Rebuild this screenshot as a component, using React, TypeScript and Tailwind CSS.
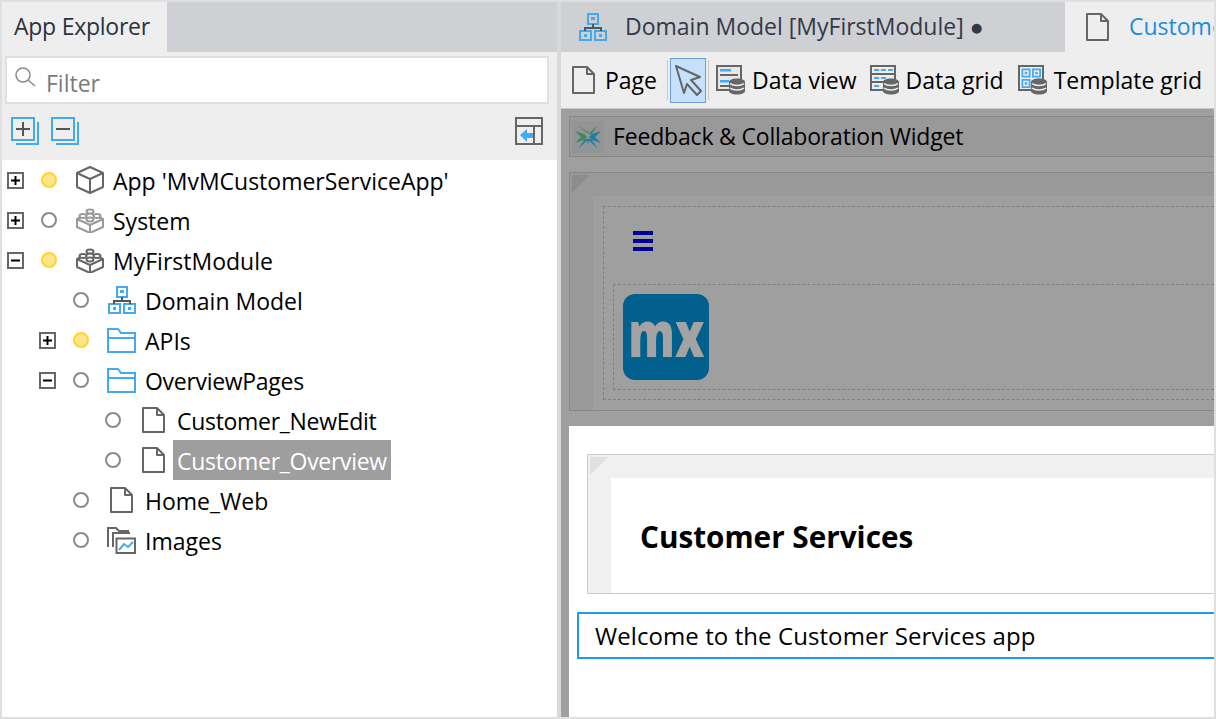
import type { ReactNode } from "react";

const Svg = ({ w, h, children }: { w: number; h: number; children: ReactNode }) => (
  <svg width={w} height={h} viewBox={`0 0 ${w} ${h}`} fill="none" className="shrink-0">
    {children}
  </svg>
);

const PageIcon = ({ h = 28 }: { h?: number }) => (
  <Svg w={23} h={h}>
    <path d={`M1 1h14l7 7v${h - 9}H1z M15 1v7h7`} stroke="#666" strokeWidth="2" strokeLinejoin="round" />
  </Svg>
);

const CubeIcon = () => (
  <Svg w={30} h={30}>
    <path d="M15 2l13 6v14l-13 6-13-6V8z M2 8l13 6 13-6 M15 14v14" stroke="#666" strokeWidth="2" strokeLinejoin="round" />
  </Svg>
);

const LegoIcon = ({ color }: { color: string }) => (
  <Svg w={30} h={25}>
    <path d="M15 5l13 6v8l-13 6-13-6v-8z M2 11l13 6 13-6 M15 17v8" stroke={color} strokeWidth="2" strokeLinejoin="round" />
    <ellipse cx="15" cy="3.500" rx="3.500" ry="2" fill="#fff" stroke={color} strokeWidth="2" />
    <ellipse cx="8" cy="8" rx="3.500" ry="2" fill="#fff" stroke={color} strokeWidth="2" />
    <ellipse cx="22" cy="8" rx="3.500" ry="2" fill="#fff" stroke={color} strokeWidth="2" />
    <ellipse cx="15" cy="11.500" rx="3.500" ry="2" fill="#fff" stroke={color} strokeWidth="2" />
  </Svg>
);

const DomainIcon = () => (
  <Svg w={28} h={28}>
    <path d="M9 1h10v10H9z M1 18h11v9H1z M16 18h11v9H16z" stroke="#42aaf0" strokeWidth="2" />
    <path d="M12 4h4v3h-4z M5 21h3v3H5z M20 21h3v3h-3z" fill="#42aaf0" />
    <path d="M14 11v4 M6 18v-3h16v3" stroke="#555" strokeWidth="2" />
  </Svg>
);

const FolderIcon = () => (
  <Svg w={29} h={25}>
    <path d="M1 1h10l3 4h14v19H1z M1 10h27" stroke="#42aaf0" strokeWidth="2" />
  </Svg>
);

const ImagesIcon = () => (
  <Svg w={29} h={27}>
    <path d="M1 20V1h8l3 3h10 M6 20V6h17" stroke="#666" strokeWidth="2" />
    <path d="M9.500 11.500h18.500v14.500H9.500z" stroke="#666" strokeWidth="2" />
    <path d="M12 23l5-6 4 3 5-5" stroke="#42aaf0" strokeWidth="2" />
  </Svg>
);

const Stack = () => (
  <g>
    <path d="M13 17c0-2 3.500-3.500 8-3.500s8 1.500 8 3.500v9c0 2-3.500 3.500-8 3.500s-8-1.500-8-3.500z" fill="#666" />
    <path d="M14 18.500c1.500 1.300 4 2 7 2s5.500-.7 7-2 M14 23c1.500 1.300 4 2 7 2s5.500-.7 7-2" stroke="#eee" strokeWidth="1.500" />
  </g>
);

const DataViewIcon = () => (
  <Svg w={29} h={30}>
    <path d="M1 1h24v24H1z" stroke="#666" strokeWidth="2" fill="#e8e8e8" />
    <path d="M4 4h11v2.500H4z M4 15h9v2.500H4z" fill="#42aaf0" />
    <path d="M4 9h18v2H4z M4 20h9v2H4z" fill="#666" />
    <Stack />
  </Svg>
);

const DataGridIcon = () => (
  <Svg w={29} h={30}>
    <path d="M1 1h24v24H1z M1 9h24 M1 17h24" stroke="#666" strokeWidth="2" />
    <path d="M4 4h5v2H4z M11 4h5v2h-5z M18 4h5v2h-5z M4 12h5v2H4z M11 12h5v2h-5z M4 20h5v2H4z" fill="#42aaf0" />
    <Stack />
  </Svg>
);

const TemplateGridIcon = () => (
  <Svg w={29} h={30}>
    <path d="M1 1h24v24H1z" stroke="#666" strokeWidth="2" />
    <path d="M3.500 3.500h9v9h-9z M14 3.500h9v9h-9z M3.500 14h9v9h-9z" fill="#42aaf0" />
    <path d="M6 6h4v4H6z M16.500 6h4v4h-4z M6 16.500h4v4H6z" stroke="#eee" strokeWidth="1.500" />
    <Stack />
  </Svg>
);

const CursorIcon = () => (
  <Svg w={30} h={32}>
    <path d="M3 2l24 11-9 3 10 11-4 4-10-11-3 9z" stroke="#666" strokeWidth="2" strokeLinejoin="round" />
  </Svg>
);

const FeedbackIcon = () => (
  <div className="flex h-[32px] w-[32px] shrink-0 items-center justify-center bg-[#949494]">
    <svg width="32" height="32" viewBox="0 0 32 32" fill="none">
      <path d="M6 4l9 8.500L16 9l1 3.500L26 4l-7 10z" fill="#3f8a5a" />
      <path d="M3 10l9 3 3 3-3 3-9 3 6-6z" fill="#3f8a5a" />
      <path d="M29 10l-9 3-3 3 3 3 9 3-6-6z" fill="#1f7ea8" />
      <path d="M6 28l9-8.500 1 3.500 1-3.500 9 8.500-7-10h-6z" fill="#1f7ea8" />
    </svg>
  </div>
);

const SearchIcon = () => (
  <Svg w={22} h={22}>
    <circle cx="9" cy="9" r="7" stroke="#8a8a8a" strokeWidth="1.500" />
    <path d="M14 14l7 6" stroke="#8a8a8a" strokeWidth="1.500" />
  </Svg>
);

const ExpandAll = ({ minus }: { minus?: boolean }) => (
  <Svg w={28} h={28}>
    <path d="M27 5v22H5" stroke="#42aaf0" strokeWidth="2" />
    <path d="M1 1h22v22H1z" stroke="#42aaf0" strokeWidth="2" />
    <path d={minus ? "M5 12h14" : "M5 12h14 M12 5v14"} stroke="#555" strokeWidth="2" />
  </Svg>
);

const CollapseIcon = () => (
  <Svg w={28} h={28}>
    <path d="M1 1h26v26H1z M1 9h26 M19 9v18" stroke="#666" strokeWidth="2" />
    <path d="M5 18l7-6v4h6v5h-6v4z" fill="#42aaf0" />
  </Svg>
);

const Expander = ({ open }: { open: boolean }) => (
  <div className="flex h-[17px] w-[17px] items-center justify-center border-2 border-[#666] bg-white">
    <svg width="13" height="13" viewBox="0 0 13 13">
      <path d={open ? "M2 6.500h9" : "M2 6.500h9 M6.500 2v9"} stroke="#000" strokeWidth="2" />
    </svg>
  </div>
);

const Row = ({
  depth,
  expander,
  warn,
  icon,
  label,
  selected,
  tight
}: {
  depth: number;
  expander?: "open" | "closed";
  warn?: boolean;
  icon: ReactNode;
  label: string;
  selected?: boolean;
  tight?: boolean;
}) => (
  <div className="flex h-[40px] items-center" style={{ paddingLeft: 5 + depth * 32 }}>
    <div className="w-[34px] shrink-0">{expander && <Expander open={expander === "open"} />}</div>
    <div className="w-[33px] shrink-0">
      <div
        className={
          warn
            ? "h-[16px] w-[16px] rounded-full border-2 border-[#ffd430] bg-[#ffe58a]"
            : "h-[16px] w-[16px] rounded-full border-2 border-[#8a8a8a] bg-white"
        }
      />
    </div>
    <div className="flex w-[39px] shrink-0 justify-center pr-[8px]">{icon}</div>
    <div
      className={
        selected
          ? "-ml-[4px] flex h-[40px] items-center bg-[#9e9e9e] px-[4px] pt-[2px] text-white"
          : "flex items-center pt-[2px] text-black"
      }
    >
      <span className={tight ? "tracking-[-0.3px]" : ""}>{label}</span>
    </div>
  </div>
);

const Tool = ({ icon, label }: { icon: ReactNode; label: string }) => (
  <div className="flex items-center gap-[7px] text-black">
    {icon}
    <span>{label}</span>
  </div>
);

const Corner = ({ color }: { color: string }) => (
  <div
    className="absolute left-[2px] top-[2px] h-0 w-0 border-r-[18px] border-t-[18px] border-r-transparent"
    style={{ borderTopColor: color }}
  />
);

const Explorer = () => (
  <div className="flex w-[555px] shrink-0 flex-col bg-white">
    <div className="flex h-[50px] bg-[#cfd0d3]">
      <div className="flex w-[165px] items-center bg-[#eeeeee] pb-[2px] pl-[12px] tracking-[-0.25px] text-[#2b3340]">
        App Explorer
      </div>
    </div>
    <div className="flex h-[108px] flex-col bg-[#eeeeee]">
      <div className="ml-[3px] mr-[8px] mt-[4px] flex h-[48px] items-center gap-[10px] border-2 border-[#e0e0e0] bg-white pl-[7px] text-[#7a7a7a]">
        <div className="-mt-[6px]">
          <SearchIcon />
        </div>
        <span className="pt-[6px]">Filter</span>
      </div>
      <div className="flex flex-1 items-center gap-[12px] pb-[2px] pl-[9px] pr-[14px]">
        <ExpandAll />
        <ExpandAll minus />
        <div className="ml-auto">
          <CollapseIcon />
        </div>
      </div>
    </div>
    <Row depth={0} expander="closed" warn icon={<CubeIcon />} label="App 'MvMCustomerServiceApp'" />
    <Row depth={0} expander="closed" icon={<LegoIcon color="#999" />} label="System" />
    <Row depth={0} expander="open" warn icon={<LegoIcon color="#666" />} label="MyFirstModule" />
    <Row depth={1} icon={<DomainIcon />} label="Domain Model" />
    <Row depth={1} expander="closed" warn icon={<FolderIcon />} label="APIs" />
    <Row depth={1} expander="open" icon={<FolderIcon />} label="OverviewPages" tight />
    <Row depth={2} icon={<PageIcon h={26} />} label="Customer_NewEdit" tight />
    <Row depth={2} icon={<PageIcon h={26} />} label="Customer_Overview" selected tight />
    <Row depth={1} icon={<PageIcon h={26} />} label="Home_Web" />
    <Row depth={1} icon={<ImagesIcon />} label="Images" />
  </div>
);

const Editor = () => (
  <div className="flex min-w-0 flex-1 flex-col overflow-hidden">
    <div className="flex h-[50px] shrink-0 whitespace-nowrap bg-[#cfd0d3]">
      <div className="flex w-[504px] shrink-0 items-center pl-[18px] text-[#33394a]">
        <DomainIcon />
        <span className="ml-[18px] pb-[2px]">Domain Model [MyFirstModule] ●</span>
      </div>
      <div className="flex flex-1 items-center bg-[#eeeeee] pl-[21px] text-[#1a8de0]">
        <PageIcon />
        <span className="ml-[20px] pb-[2px]">Customer_Overview</span>
      </div>
    </div>
    <div className="flex h-[57px] shrink-0 items-center whitespace-nowrap border-b border-[#c8c8c8] bg-[#eeeeee] pl-[11px]">
      <div className="flex items-center gap-[10px] text-black">
        <PageIcon />
        <span>Page</span>
      </div>
      <div className="ml-[10px] h-[40px] w-px bg-[#c8c8c8]" />
      <div className="ml-[2px] flex h-[45px] w-[36px] items-center justify-center border border-[#6a9fdc] bg-[#c5e1fb]">
        <CursorIcon />
      </div>
      <div className="ml-[2px] h-[40px] w-px bg-[#c8c8c8]" />
      <div className="ml-[7px]">
        <Tool icon={<DataViewIcon />} label="Data view" />
      </div>
      <div className="ml-[13px]">
        <Tool icon={<DataGridIcon />} label="Data grid" />
      </div>
      <div className="ml-[14px]">
        <Tool icon={<TemplateGridIcon />} label="Template grid" />
      </div>
    </div>
    <div className="flex min-h-0 flex-1 flex-col bg-[#9f9f9f] pl-[8px]">
      <div className="mt-[7px] flex h-[41px] shrink-0 items-center gap-[9px] border border-r-0 border-[#878787] bg-[#999999] pl-[2px] text-black">
        <FeedbackIcon />
        <span className="whitespace-nowrap pb-[1px] tracking-[-0.18px]">Feedback &amp; Collaboration Widget</span>
      </div>
      <div className="relative mt-[15px] h-[239px] shrink-0 border border-r-0 border-[#878787] bg-[#999999] pl-[23px] pt-[23px]">
        <Corner color="#8c8c8c" />
        <div className="h-full bg-[#9f9f9f] pl-[10px] pt-[10px]">
          <div className="h-[194px] border border-r-0 border-dashed border-[#808080] pl-[9px] pt-[24px]">
            <div className="ml-[20px] flex h-[20px] w-[20px] flex-col justify-between">
              <div className="h-[4px] bg-[#000099]" />
              <div className="h-[4px] bg-[#000099]" />
              <div className="h-[4px] bg-[#000099]" />
            </div>
            <div className="mt-[33px] h-[106px] border border-r-0 border-dashed border-[#808080] pl-[9px] pt-[9px]">
              <div className="flex h-[86px] w-[86px] items-center justify-center overflow-hidden rounded-[12px] bg-[#02608f] text-[63px] font-extrabold leading-none text-[#a3a3a3]">
                <span className="-mt-[9px] scale-x-[0.74]">mx</span>
              </div>
            </div>
          </div>
        </div>
      </div>
      <div className="mt-[15px] min-h-0 flex-1 bg-white pl-[8px] pt-[28px]">
        <div className="relative ml-[10px] h-[140px] border border-r-0 border-[#cccccc] bg-[#f0f0f0] pl-[23px] pt-[23px]">
          <Corner color="#e0e0e0" />
          <div className="flex h-full items-center bg-white pl-[29px] pt-[3px] text-[29.7px] font-bold text-black">
            <span className="whitespace-nowrap">Customer Services</span>
          </div>
        </div>
        <div className="mt-[18px] flex h-[47px] items-center whitespace-nowrap border-2 border-r-0 border-[#1e9bea] pl-[16px] text-[24px] tracking-[0.08px] text-black">
          Welcome to the Customer Services app
        </div>
      </div>
    </div>
  </div>
);

export default function App() {
  return (
    <div className="flex h-[719px] w-[1216px] overflow-hidden border-2 border-[#dfdfdf] bg-[#dfdfdf] font-['Open_Sans',sans-serif] text-[23px]">
      <Explorer />
      <div className="w-[4px] shrink-0 bg-[#d8d9dc]" />
      <Editor />
    </div>
  );
}
